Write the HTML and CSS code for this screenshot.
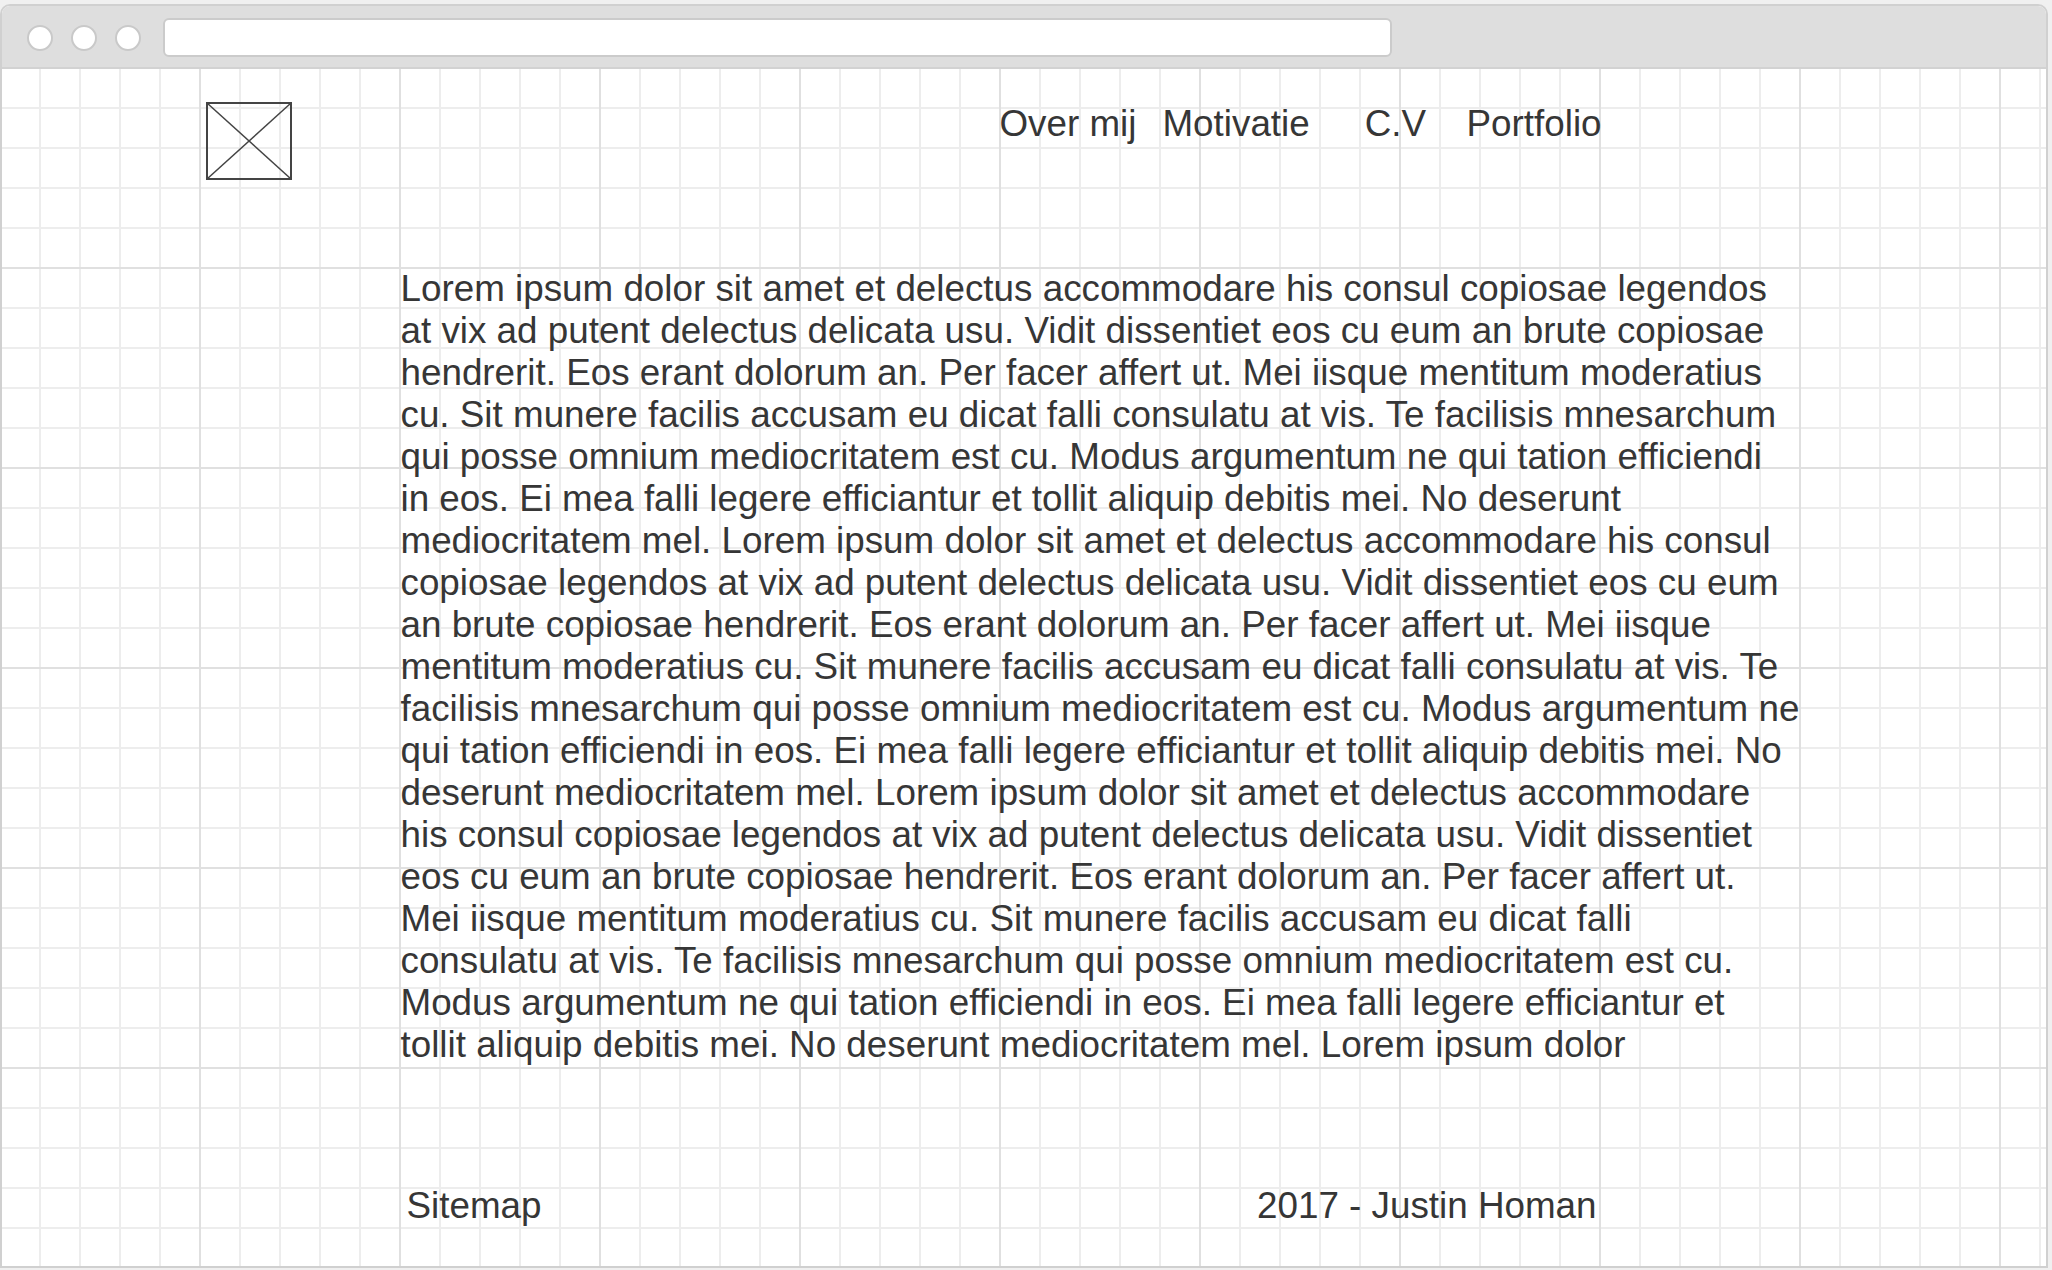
FILE: index.html
```html
<!DOCTYPE html>
<html lang="nl">
<head>
<meta charset="utf-8">
<title>Justin Homan</title>
<link rel="stylesheet" href="styles.css">
</head>
<body>
<div class="window">
  <div class="chrome">
    <div class="dots">
      <span class="dot"></span>
      <span class="dot"></span>
      <span class="dot"></span>
    </div>
    <div class="address"></div>
  </div>
  <div class="canvas">
    <header class="top">
      <div class="logo">
        <svg width="86" height="78" viewBox="0 0 86 78">
          <rect x="1" y="1" width="84" height="76" fill="none" stroke="#444" stroke-width="2"/>
          <line x1="1" y1="1" x2="85" y2="77" stroke="#444" stroke-width="1.5"/>
          <line x1="85" y1="1" x2="1" y2="77" stroke="#444" stroke-width="1.5"/>
        </svg>
      </div>
      <nav class="nav">
        <a class="nav-item nav-over">Over mij</a>
        <a class="nav-item nav-motivatie">Motivatie</a>
        <a class="nav-item nav-cv">C.V</a>
        <a class="nav-item nav-portfolio">Portfolio</a>
      </nav>
    </header>
    <main class="content">
      <p class="text">Lorem ipsum dolor sit amet et delectus accommodare his consul copiosae legendos<br>at vix ad putent delectus delicata usu. Vidit dissentiet eos cu eum an brute copiosae<br>hendrerit. Eos erant dolorum an. Per facer affert ut. Mei iisque mentitum moderatius<br>cu. Sit munere facilis accusam eu dicat falli consulatu at vis. Te facilisis mnesarchum<br>qui posse omnium mediocritatem est cu. Modus argumentum ne qui tation efficiendi<br>in eos. Ei mea falli legere efficiantur et tollit aliquip debitis mei. No deserunt<br>mediocritatem mel. Lorem ipsum dolor sit amet et delectus accommodare his consul<br>copiosae legendos at vix ad putent delectus delicata usu. Vidit dissentiet eos cu eum<br>an brute copiosae hendrerit. Eos erant dolorum an. Per facer affert ut. Mei iisque<br>mentitum moderatius cu. Sit munere facilis accusam eu dicat falli consulatu at vis. Te<br>facilisis mnesarchum qui posse omnium mediocritatem est cu. Modus argumentum ne<br>qui tation efficiendi in eos. Ei mea falli legere efficiantur et tollit aliquip debitis mei. No<br>deserunt mediocritatem mel. Lorem ipsum dolor sit amet et delectus accommodare<br>his consul copiosae legendos at vix ad putent delectus delicata usu. Vidit dissentiet<br>eos cu eum an brute copiosae hendrerit. Eos erant dolorum an. Per facer affert ut.<br>Mei iisque mentitum moderatius cu. Sit munere facilis accusam eu dicat falli<br>consulatu at vis. Te facilisis mnesarchum qui posse omnium mediocritatem est cu.<br>Modus argumentum ne qui tation efficiendi in eos. Ei mea falli legere efficiantur et<br>tollit aliquip debitis mei. No deserunt mediocritatem mel. Lorem ipsum dolor</p>
    </main>
    <footer class="foot">
      <span class="foot-sitemap">Sitemap</span>
      <span class="foot-credit">2017 - Justin Homan</span>
    </footer>
  </div>
</div>
</body>
</html>
```

FILE: styles.css
```css
html, body {
  margin: 0;
  padding: 0;
}

body {
  background: #f0f0f0;
  font-family: "Liberation Sans", Arial, sans-serif;
  color: #363636;
  width: 2052px;
  height: 1270px;
  overflow: hidden;
}

.window {
  box-sizing: border-box;
  margin-top: 4px;
  width: 2048px;
  height: 1264px;
  border: 2px solid #d0d0d0;
  border-radius: 10px 10px 0 0;
  overflow: hidden;
  display: flex;
  flex-direction: column;
  background: #ffffff;
}

.chrome {
  height: 61px;
  flex: 0 0 auto;
  background: #dedede;
  border-bottom: 2px solid #d2d2d2;
  display: flex;
  align-items: flex-start;
}

.dots {
  display: flex;
  gap: 18px;
  margin-left: 25px;
  margin-top: 19px;
}

.dot {
  box-sizing: border-box;
  width: 26px;
  height: 26px;
  border-radius: 50%;
  background: #ffffff;
  border: 2px solid #c9c9c9;
}

.address {
  box-sizing: border-box;
  margin-left: 22px;
  margin-top: 12px;
  width: 1229px;
  height: 39px;
  background: #ffffff;
  border: 2px solid #cbcbcb;
  border-radius: 6px;
}

.canvas {
  flex: 1 1 auto;
  display: flex;
  flex-direction: column;
  background-color: #ffffff;
  background-image:
    linear-gradient(to right, #e0e0e0 2px, transparent 2px),
    linear-gradient(to bottom, #e0e0e0 2px, transparent 2px),
    linear-gradient(to right, #ededed 2px, transparent 2px),
    linear-gradient(to bottom, #ededed 2px, transparent 2px);
  background-size: 200px 200px, 200px 200px, 40px 40px, 40px 40px;
  background-position: -3px 0, 0 -2px, 37px 0, 0 38px;
  font-size: 36.8px;
  line-height: normal;
}

.top {
  display: flex;
  align-items: flex-start;
  margin-top: 33px;
  padding-left: 204px;
}

.logo {
  width: 86px;
  height: 78px;
  flex: 0 0 auto;
}

.logo svg {
  display: block;
}

.nav {
  display: flex;
  margin-left: 707.5px;
  padding-top: 0.5px;
  white-space: nowrap;
}

.nav-item {
  color: #363636;
  text-decoration: none;
}

.nav-motivatie {
  margin-left: 26px;
}

.nav-cv {
  margin-left: 55px;
}

.nav-portfolio {
  margin-left: 40.5px;
}

.content {
  margin-top: 88px;
  padding-left: 398.5px;
}

.text {
  margin: 0;
  white-space: nowrap;
}

.foot {
  display: flex;
  margin-top: auto;
  margin-bottom: 39px;
  padding-left: 404.5px;
  white-space: nowrap;
}

.foot-credit {
  margin-left: 715.5px;
}
```
